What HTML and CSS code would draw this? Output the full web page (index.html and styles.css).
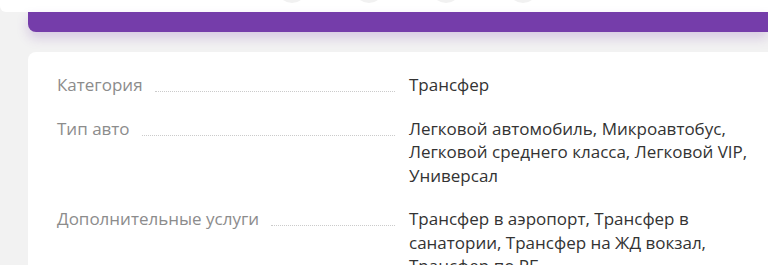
FILE: index.html
```html
<!DOCTYPE html>
<html lang="ru">
<head>
<meta charset="utf-8">
<link rel="stylesheet" href="styles.css">
</head>
<body>
  <div class="header">
    <span class="dot"></span><span class="dot"></span><span class="dot"></span><span class="dot"></span>
  </div>
  <div class="banner"></div>
  <div class="card">
    <div class="row">
      <div class="label"><span>Категория</span><i class="leader"></i></div>
      <div class="value">Трансфер</div>
    </div>
    <div class="row">
      <div class="label"><span>Тип авто</span><i class="leader"></i></div>
      <div class="value">Легковой автомобиль, Микроавтобус, Легковой среднего класса, Легковой VIP, Универсал</div>
    </div>
    <div class="row">
      <div class="label"><span>Дополнительные услуги</span><i class="leader"></i></div>
      <div class="value">Трансфер в аэропорт, Трансфер в санатории, Трансфер на ЖД вокзал, Трансфер по РБ</div>
    </div>
  </div>
</body>
</html>
```
FILE: styles.css
```css
html, body {
  margin: 0;
  padding: 0;
}
body {
  background: #f2f2f2;
  font-family: "Open Sans", "Liberation Sans", sans-serif;
  overflow: hidden;
  width: 768px;
}
.header {
  height: 12px;
  background: #fff;
  border-bottom-left-radius: 6px;
  display: flex;
  gap: 47px;
  padding-left: 277px;
  overflow: hidden;
}
.dot {
  width: 30px;
  height: 30px;
  margin-top: -27px;
  border-radius: 50%;
  background: #f1f1f1;
  flex: none;
}
.banner {
  height: 20px;
  margin-left: 28px;
  background: #753daa;
  border-bottom-left-radius: 8px;
  box-shadow: 0 6px 12px rgba(117, 61, 170, 0.22);
}
.card {
  margin-top: 20px;
  margin-left: 28px;
  background: #fff;
  border-top-left-radius: 8px;
  padding: 21px 0 20px 29px;
  display: flex;
  flex-direction: column;
  gap: 20px;
  min-height: 300px;
}
.row {
  display: grid;
  grid-template-columns: 338px 345px;
  column-gap: 14px;
  font-size: 17px;
  line-height: 23.5px;
}
.label {
  display: flex;
  align-items: baseline;
  color: #8c8c8c;
}
.label span {
  white-space: nowrap;
}
.leader {
  flex: 1;
  margin-left: 12px;
  border-bottom: 1px dotted #cbcbcb;
  height: 1px;
  align-self: flex-start;
  margin-top: 17px;
}
.value {
  color: #333;
}
```
